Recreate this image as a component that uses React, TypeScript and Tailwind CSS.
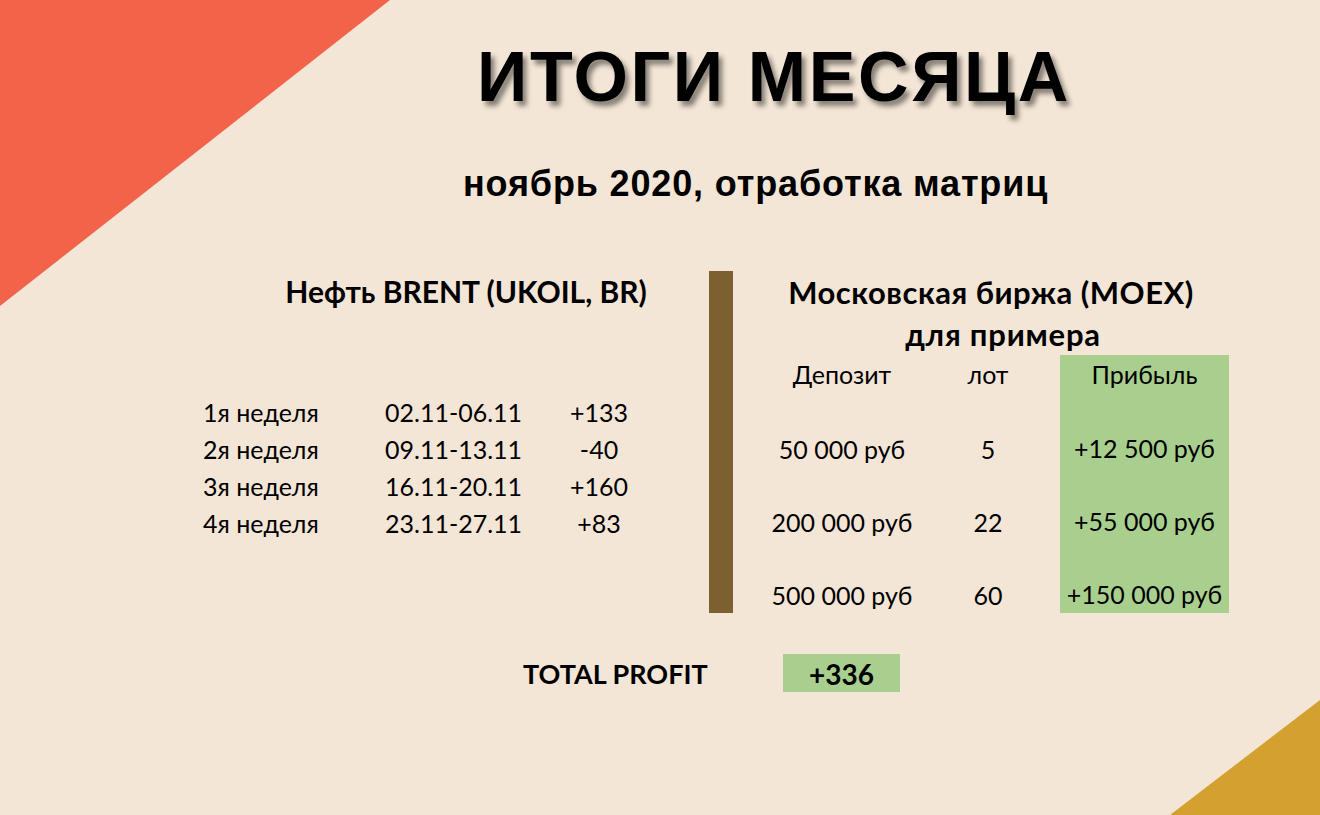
import React from "react";

const calibri = { fontFamily: "Lato, 'Noto Sans', sans-serif" };

export default function App() {
  const weeks = [
    ["1я неделя", "02.11-06.11", "+133"],
    ["2я неделя", "09.11-13.11", "-40"],
    ["3я неделя", "16.11-20.11", "+160"],
    ["4я неделя", "23.11-27.11", "+83"],
  ];
  const deposits = ["50 000 руб", "200 000 руб", "500 000 руб"];
  const lots = ["5", "22", "60"];
  const profits = ["+12 500 руб", "+55 000 руб", "+150 000 руб"];

  return (
    <div className="relative w-[1320px] h-[815px] overflow-hidden bg-[#F3E6D6] text-black">
      <svg className="absolute left-0 top-0" width="390" height="306" viewBox="0 0 390 306">
        <polygon points="0,0 390,0 0,306" fill="#F3634A" />
      </svg>
      <svg className="absolute right-0 bottom-0" width="150" height="115" viewBox="0 0 150 115">
        <polygon points="150,0 150,115 0,115" fill="#D4A02F" />
      </svg>

      <div className="relative flex flex-col">
        <h1
          className="pl-[477px] pt-[42px] h-[111px] text-[70px] leading-[70px] font-bold tracking-[2.6px] whitespace-nowrap [text-shadow:4px_5px_5px_rgba(0,0,0,0.45)]"
          style={{ fontFamily: "'Liberation Sans', Arial, sans-serif" }}
        >
          ИТОГИ МЕСЯЦА
        </h1>
        <p
          className="pl-[463px] mt-[55px] h-[36px] text-[36px] leading-[36px] font-bold tracking-[0.85px] whitespace-nowrap"
          style={{ fontFamily: "'Liberation Sans', Arial, sans-serif" }}
        >
          ноябрь 2020, отработка матриц
        </p>

        <div className="flex mt-[69px]" style={calibri}>
          {/* Left block */}
          <div className="w-[709px] flex flex-col">
            <div className="ml-[266px] w-[400px] h-[40px] flex items-center justify-center text-[30px] font-bold whitespace-nowrap">
              Нефть BRENT (UKOIL, BR)
            </div>
            <div className="mt-[83px] flex flex-col text-[25px]">
              {weeks.map((w) => (
                <div key={w[0]} className="flex h-[37px] items-center whitespace-nowrap">
                  <div className="ml-[203px] w-[182px]">{w[0]}</div>
                  <div className="w-[155px]">{w[1]}</div>
                  <div className="w-[118px] text-center">{w[2]}</div>
                </div>
              ))}
            </div>
          </div>

          {/* Divider */}
          <div className="w-[24px] h-[342px] bg-[#7D6030]" />

          {/* Right block */}
          <div className="flex-1 flex flex-col">
            <div className="w-[516px] h-[42px] flex items-center justify-center text-[31px] font-bold tracking-[0.5px] whitespace-nowrap">
              Московская биржа (MOEX)
            </div>
            <div className="w-[540px] h-[42px] flex items-center justify-center text-[31px] font-bold tracking-[0.8px] whitespace-nowrap">
              для примера
            </div>
            <div className="flex pl-[39px] text-[25px] whitespace-nowrap">
              <div className="w-[140px] flex flex-col gap-[37px]">
                <div className="h-[40px] flex items-center justify-center">Депозит</div>
                {deposits.map((d) => (
                  <div key={d} className="h-[36px] flex items-center justify-center">{d}</div>
                ))}
              </div>
              <div className="ml-[36px] w-[80px] flex flex-col gap-[37px]">
                <div className="h-[40px] flex items-center justify-center">лот</div>
                {lots.map((d) => (
                  <div key={d} className="h-[36px] flex items-center justify-center">{d}</div>
                ))}
              </div>
              <div className="ml-[32px] w-[169px] h-[258px] bg-[#A9CF8E] flex flex-col gap-[37px]">
                <div className="h-[40px] flex items-center justify-center">Прибыль</div>
                {profits.map((d) => (
                  <div key={d} className="h-[36px] flex items-center justify-center">{d}</div>
                ))}
              </div>
            </div>
          </div>
        </div>

        <div className="flex mt-[38px] items-center" style={calibri}>
          <div className="ml-[523px] w-[260px] text-[27px] font-bold whitespace-nowrap pt-[2px]">TOTAL PROFIT</div>
          <div className="w-[117px] h-[38px] bg-[#A9CF8E] flex items-center justify-center text-[28px] font-bold pt-[2px]">
            +336
          </div>
        </div>
      </div>
    </div>
  );
}
